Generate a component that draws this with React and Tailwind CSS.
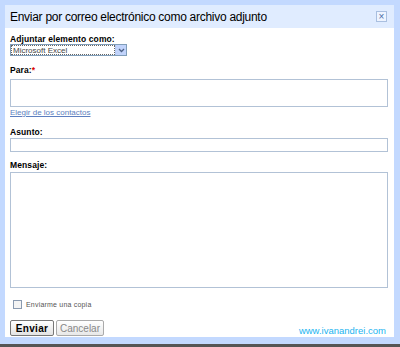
import React from 'react';

const Label = ({ children }) => (
  <div className="text-[8.5px] font-bold leading-[9px] text-black tracking-[0.1px]">{children}</div>
);

const App = () => {
  return (
    <div className="w-[400px] h-[347px] bg-[#c3d9ff] pl-[5px] pr-[6px] pt-[5px] flex flex-col font-['Liberation_Sans',Arial,sans-serif]">
      <div className="h-[332px] flex flex-col bg-white">
        <div className="h-[23px] bg-[#e0ecff] flex items-center justify-between pl-[5px] pr-[7px]">
          <span className="text-[12px] text-black tracking-[-0.28px]">Enviar por correo electrónico como archivo adjunto</span>
          <span className="w-[11px] h-[11px] border border-[#a9bfe0] bg-[#eef4ff] flex items-center justify-center text-[#4a6ea8] text-[10px] leading-none">×</span>
        </div>
        <div className="flex flex-col pl-[5px] pr-[6px] pt-[7px]">
          <Label>Adjuntar elemento como:</Label>
          <div className="w-[117px] h-[12px] border border-[#7f9db9] flex">
            <span className="flex-1 text-[8px] leading-[9px] text-[#444] pl-[1px] border border-dotted border-[#666]">Microsoft Excel</span>
            <span className="w-[11px] bg-[#c1d3fb] border-l border-[#b4c8f0] flex items-center justify-center">
              <svg width="7" height="5" viewBox="0 0 7 5"><path d="M1 1 L3.5 3.5 L6 1" stroke="#4d6185" strokeWidth="1.3" fill="none" /></svg>
            </span>
          </div>
          <div className="mt-[10px]"><Label>Para:<span className="text-[#d00]">*</span></Label></div>
          <div className="mt-[4px] h-[28px] border border-[#b2c2d6] bg-white" />
          <a className="mt-[1px] text-[8px] leading-[10px] text-[#5d7fc0] underline">Elegir de los contactos</a>
          <div className="mt-[10px]"><Label>Asunto:</Label></div>
          <div className="mt-[1px] h-[14px] border border-[#b2c2d6] bg-white" />
          <div className="mt-[9px]"><Label>Mensaje:</Label></div>
          <div className="mt-[2px] h-[116px] border border-[#b2c2d6] bg-white" />
          <div className="mt-[11px] h-[10px] flex items-center gap-[4px] pl-[3px]">
            <span className="w-[9px] h-[9px] border border-[#8a9ab0] bg-[#f4f4f4]" />
            <span className="text-[7px] leading-[9px] text-[#555] tracking-[0.2px]">Enviarme una copia</span>
          </div>
          <div className="mt-[11px] flex items-center justify-between">
            <div className="flex gap-[2px]">
              <span className="w-[44px] h-[16px] border border-[#777] rounded-[2px] bg-gradient-to-b from-white to-[#e3e3e3] text-[10px] font-bold text-black flex items-center justify-center tracking-[0.3px]">Enviar</span>
              <span className="w-[48px] h-[16px] border border-[#aaa] rounded-[2px] bg-gradient-to-b from-white to-[#e8e8e8] text-[10px] text-[#888] flex items-center justify-center">Cancelar</span>
            </div>
            <span className="text-[9.5px] leading-[10px] text-[#22b4f0] pr-[2px] mt-[5px]">www.ivanandrei.com</span>
          </div>
        </div>
      </div>
      <div className="h-[7px]" />
      <div className="h-[3px] bg-[#555] ml-[-5px] mr-[-6px]" />
    </div>
  );
};

export default App;
